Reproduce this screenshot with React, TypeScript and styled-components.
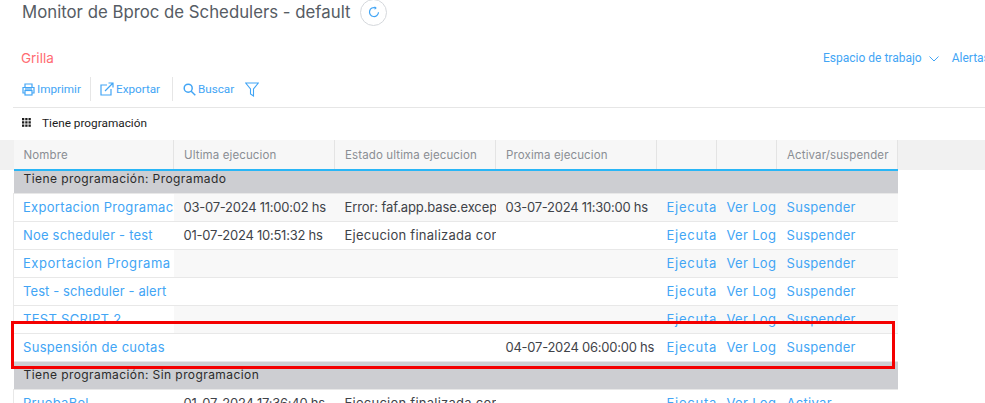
import React from 'react'
import styled, { createGlobalStyle } from 'styled-components'

const GlobalStyle = createGlobalStyle`
  html, body {
    margin: 0;
    height: 403px;
    overflow: hidden;
    background: #fff;
  }
`

const LINK = '#42a5f5'
const DISPLAY_FONT = `Inter, "Open Sans", sans-serif`
const UI_FONT = `Roboto, "Liberation Sans", sans-serif`

const Page = styled.div`
  position: relative;
  width: 985px;
  height: 403px;
  overflow: hidden;
  font-family: ${DISPLAY_FONT};
`

const TitleRow = styled.div`
  display: flex;
  align-items: center;
  height: 24px;
  padding-left: 22px;
  gap: 10px;
`

const Title = styled.h1`
  margin: 0;
  font-size: 16.8px;
  font-weight: 400;
  letter-spacing: 0;
  color: #565c64;
`

const RefreshButton = styled.button`
  display: flex;
  align-items: center;
  justify-content: center;
  flex: none;
  width: 27px;
  height: 27px;
  padding: 0;
  border: 1px solid #d5d8dc;
  border-radius: 50%;
  background: #fff;
  color: ${LINK};
`

const TabRow = styled.div`
  display: flex;
  align-items: center;
  justify-content: space-between;
  margin-top: 22px;
  height: 24px;
  padding-left: 21px;
  white-space: nowrap;
`

const TabTitle = styled.span`
  font-size: 13.5px;
  font-weight: 400;
  color: #ff6b72;
`

const TabLinks = styled.div`
  display: flex;
  align-items: center;
  width: 162px;
  font-family: ${UI_FONT};
  font-size: 12px;
  color: ${LINK};
  overflow: hidden;
`

const Chevron = styled.svg`
  margin: 1px 13px 0 7px;
  flex: none;
`

const Toolbar = styled.div`
  display: flex;
  align-items: center;
  height: 30px;
  margin: 4px 0 0 13px;
  padding-bottom: 3px;
  border-bottom: 1px solid #e6e6e6;
`

const ToolGroup = styled.div<{ $width: number; $divider?: boolean; $pad?: number }>`
  display: flex;
  align-items: center;
  gap: 2px;
  box-sizing: border-box;
  width: ${p => p.$width}px;
  height: 24px;
  padding-left: ${p => p.$pad ?? 9}px;
  border-right: ${p => (p.$divider ? '1px solid #e6e6e6' : 'none')};
  font-family: ${UI_FONT};
  font-size: 11.7px;
  color: ${LINK};

  svg {
    flex: none;
  }
`

const FilterSlot = styled.span`
  display: flex;
  margin-left: 9px;
`

const GroupBar = styled.div`
  display: flex;
  align-items: center;
  gap: 11px;
  height: 29px;
  padding: 0 0 2px 22px;
  font-family: ${UI_FONT};
  font-size: 11.8px;
  color: #1c1c1c;
`

const TableArea = styled.div`
  padding-left: 13px;
  margin-top: 1px;
  background: linear-gradient(#f1f1f1, #f1f1f1) no-repeat top / 100% 30px;
`

const Table = styled.table`
  width: 884px;
  table-layout: fixed;
  border-collapse: collapse;
  font-size: 13px;
`

const HeadCell = styled.th<{ $width: number }>`
  width: ${p => p.$width}px;
  height: 30px;
  box-sizing: border-box;
  padding: 0 10px;
  background: #f7f7f7;
  border-right: 1px solid #e4e4e4;
  border-bottom: 2px solid #29b6f6;
  font-size: 11.5px;
  font-weight: 400;
  letter-spacing: 0.12px;
  text-align: left;
  white-space: nowrap;
  overflow: hidden;
  color: #8a8e94;
`

const GroupCell = styled.td<{ $first?: boolean }>`
  height: ${p => (p.$first ? 23 : 28)}px;
  box-sizing: border-box;
  padding: ${p => (p.$first ? '0 10px 6px' : '0 10px 2px')};
  background: #cdced2;
  border-bottom: 1px solid #e8e8e8;
  font-size: 12px;
  letter-spacing: 0.42px;
  white-space: nowrap;
  color: #2b2b2b;
`

const Cell = styled.td<{ $striped?: boolean; $tracking?: number }>`
  height: 28px;
  box-sizing: border-box;
  padding: 0 10px;
  background: ${p => (p.$striped ? '#f8f8f8' : '#fff')};
  border-bottom: 1px solid #e8e8e8;
  white-space: nowrap;
  overflow: hidden;
  letter-spacing: ${p => p.$tracking ?? -0.25}px;
  color: #3f4349;
`

const LinkCell = styled(Cell)`
  padding: 0 0 0 10px;
  letter-spacing: ${p => p.$tracking ?? 0.3}px;
  color: ${LINK};
`

const NameCell = styled(LinkCell)`
  border-left: 1px solid #e8e8e8;
  padding-left: 9px;
  background: #fff;
`

const Highlight = styled.div`
  position: absolute;
  left: 11px;
  top: 321px;
  width: 878px;
  height: 42px;
  border: 3px solid #f40000;
  pointer-events: none;
`

const PrinterIcon = () => (
  <svg width="13" height="13" viewBox="0 0 13 13" fill="none" stroke={LINK} strokeWidth="1.2">
    <path d="M3 4.5V1h7v3.5M3 10H1V4.5h11V10h-2" />
    <rect x="3" y="7.5" width="7" height="4.5" />
    <path d="M3 6h7" />
  </svg>
)

const ExportIcon = () => (
  <svg width="14" height="14" viewBox="0 0 14 14" fill="none" stroke={LINK} strokeWidth="1.2">
    <path d="M7 3H1v10h10V7" />
    <path d="M5 9l8-8M8.5 1H13v4.5" />
  </svg>
)

const SearchIcon = () => (
  <svg width="13" height="13" viewBox="0 0 13 13" fill="none" stroke={LINK} strokeWidth="1.5">
    <circle cx="5.2" cy="5.2" r="4" />
    <path d="M8.2 8.2L12.3 12.3" />
  </svg>
)

const FilterIcon = () => (
  <svg width="14" height="15" viewBox="0 0 14 15" fill="none" stroke={LINK} strokeWidth="1.1">
    <path d="M.7 1h12.6L8.5 7v7L5.5 12V7z" />
  </svg>
)

const RefreshIcon = () => (
  <svg width="12" height="12" viewBox="0 0 12 12" fill="none" stroke={LINK} strokeWidth="1.2">
    <path d="M10.5 6.2A4.5 4.5 0 1 1 7.5 1.8" />
    <path d="M6.6 0.2l2.2 1.8-2.2 1.8" fill={LINK} stroke="none" />
  </svg>
)

const GridDots = () => (
  <svg width="9" height="9" viewBox="0 0 9 9" fill="#1c1c1c">
    {[0, 3.25, 6.5].flatMap(y =>
      [0, 3.25, 6.5].map(x => <rect key={`${x}-${y}`} x={x} y={y} width="2.3" height="2.3" />),
    )}
  </svg>
)

const columns = [
  { label: 'Nombre', width: 160 },
  { label: 'Ultima ejecucion', width: 161 },
  { label: 'Estado ultima ejecucion', width: 161 },
  { label: 'Proxima ejecucion', width: 161 },
  { label: '', width: 60 },
  { label: '', width: 60 },
  { label: 'Activar/suspender', width: 121 },
]

type Row = {
  name: string
  nameTracking?: number
  last?: string
  state?: string
  stateTracking?: number
  next?: string
  action: string
}

const scheduled: Row[] = [
  {
    name: 'Exportacion Programacion',
    last: '03-07-2024 11:00:02 hs',
    state: 'Error: faf.app.base.exception',
    stateTracking: -0.1,
    next: '03-07-2024 11:30:00 hs',
    action: 'Suspender',
  },
  {
    name: 'Noe scheduler - test',
    nameTracking: 0.2,
    last: '01-07-2024 10:51:32 hs',
    state: 'Ejecucion finalizada correctamente',
    stateTracking: 0.25,
    action: 'Suspender',
  },
  { name: 'Exportacion Programa', nameTracking: 0.55, action: 'Suspender' },
  { name: 'Test - scheduler - alert', nameTracking: 0.1, action: 'Suspender' },
  { name: 'TEST SCRIPT 2', action: 'Suspender' },
  { name: 'Suspensión de cuotas', next: '04-07-2024 06:00:00 hs', action: 'Suspender' },
]

const unscheduled: Row[] = [
  {
    name: 'PruebaBel',
    last: '01-07-2024 17:36:40 hs',
    state: 'Ejecucion finalizada correctamente',
    stateTracking: 0.25,
    action: 'Activar',
  },
]

const DataRow = ({ row, striped }: { row: Row; striped: boolean }) => (
  <tr>
    <NameCell $tracking={row.nameTracking}>{row.name}</NameCell>
    <Cell $striped={striped}>{row.last}</Cell>
    <Cell $striped={striped} $tracking={row.stateTracking}>{row.state}</Cell>
    <Cell $striped={striped}>{row.next}</Cell>
    <LinkCell $striped={striped} $tracking={0.75}>Ejecutar</LinkCell>
    <LinkCell $striped={striped}>Ver Log</LinkCell>
    <LinkCell $striped={striped}>{row.action}</LinkCell>
  </tr>
)

export default function App() {
  return (
    <Page>
      <GlobalStyle />
      <TitleRow>
        <Title>Monitor de Bproc de Schedulers - default</Title>
        <RefreshButton aria-label="Actualizar">
          <RefreshIcon />
        </RefreshButton>
      </TitleRow>
      <TabRow>
        <TabTitle>Grilla</TabTitle>
        <TabLinks>
          Espacio de trabajo
          <Chevron width="10" height="6" viewBox="0 0 10 6" fill="none" stroke={LINK}>
            <path d="M.5.5L5 5 9.500.5" />
          </Chevron>
          Alertas
        </TabLinks>
      </TabRow>
      <Toolbar>
        <ToolGroup $width={78} $divider>
          <PrinterIcon />
          Imprimir
        </ToolGroup>
        <ToolGroup $width={82} $divider>
          <ExportIcon />
          Exportar
        </ToolGroup>
        <ToolGroup $width={100} $pad={10}>
          <SearchIcon />
          Buscar
          <FilterSlot>
            <FilterIcon />
          </FilterSlot>
        </ToolGroup>
      </Toolbar>
      <GroupBar>
        <GridDots />
        Tiene programación
      </GroupBar>
      <TableArea>
        <Table>
          <thead>
            <tr>
              {columns.map((c, i) => (
                <HeadCell key={i} $width={c.width}>{c.label}</HeadCell>
              ))}
            </tr>
          </thead>
          <tbody>
            <tr>
              <GroupCell $first colSpan={7}>Tiene programación: Programado</GroupCell>
            </tr>
            {scheduled.map((row, i) => (
              <DataRow key={row.name + i} row={row} striped={i % 2 === 0} />
            ))}
            <tr>
              <GroupCell colSpan={7}>Tiene programación: Sin programacion</GroupCell>
            </tr>
            {unscheduled.map((row, i) => (
              <DataRow key={row.name + i} row={row} striped={false} />
            ))}
          </tbody>
        </Table>
      </TableArea>
      <Highlight />
    </Page>
  )
}
